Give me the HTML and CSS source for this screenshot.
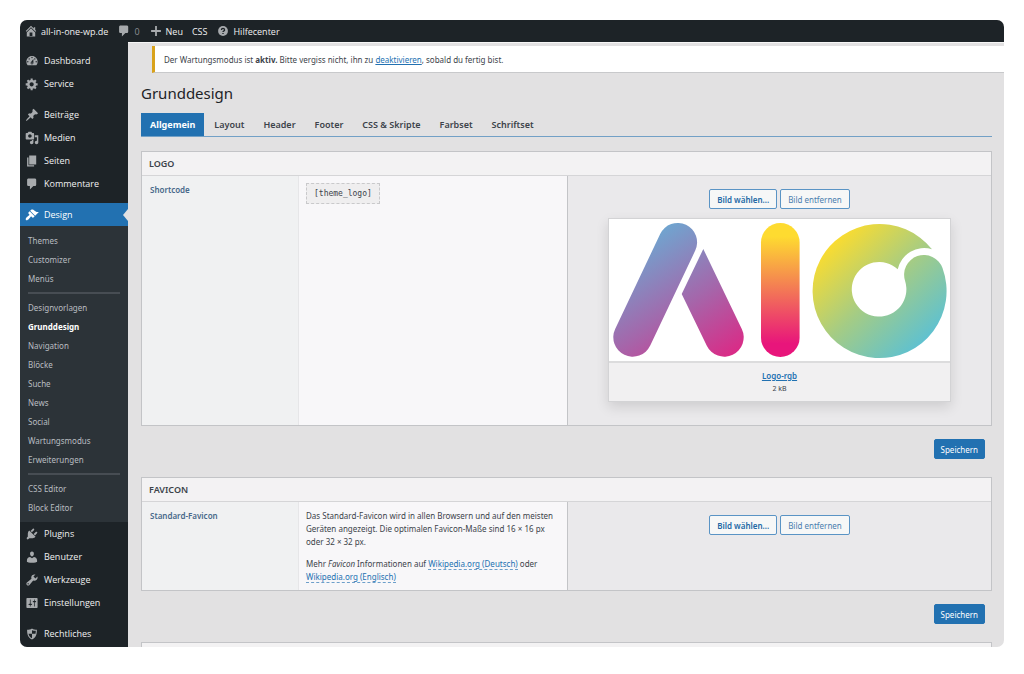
FILE: index.html
```html
<!DOCTYPE html>
<html lang="de">
<head>
<meta charset="utf-8">
<title>Grunddesign</title>
<link rel="stylesheet" href="styles.css">
</head>
<body>
<svg class="sprite" aria-hidden="true">
  <symbol id="i-home" viewBox="0 0 20 20"><path d="M16 8.500l1.530 1.530-1.060 1.060L10 4.600l-6.470 6.490-1.060-1.060L10 2.500l4 4v-2h2v4zm-6-2.460l6 5.990V18H4v-5.970zM12 17v-5H8v5h4z"/></symbol>
  <symbol id="i-comment" viewBox="0 0 20 20"><path d="M5 2h9c1.100 0 2 .9 2 2v7c0 1.100-.9 2-2 2h-2l-5 5v-5H5c-1.100 0-2-.9-2-2V4c0-1.100.9-2 2-2z"/></symbol>
  <symbol id="i-plus" viewBox="0 0 20 20"><path d="M17 8.700v2.600h-5.700V17H8.700v-5.700H3V8.700h5.700V3h2.600v5.700z"/></symbol>
  <symbol id="i-help" viewBox="0 0 20 20"><circle cx="10" cy="10" r="7"/><path class="cut-line" d="M7.800 8.400c0-2.800 4.400-2.800 4.400 0 0 1.600-2.200 1.600-2.200 3.200M10 12.800v1.600"/></symbol>
  <symbol id="i-dashboard" viewBox="0 0 20 20"><path d="M3.760 16h12.480c1.100-1.370 1.760-3.110 1.760-5 0-4.420-3.580-8-8-8s-8 3.580-8 8c0 1.890.66 3.630 1.760 5zM10 4c.55 0 1 .45 1 1s-.45 1-1 1-1-.45-1-1 .45-1 1-1zM6 6c.55 0 1 .45 1 1s-.45 1-1 1-1-.45-1-1 .45-1 1-1zm8 0c.55 0 1 .45 1 1s-.45 1-1 1-1-.45-1-1 .45-1 1-1zm-5.370 5.550L12 7v6c0 1.100-.9 2-2 2s-2-.9-2-2c0-.57.24-1.080.63-1.450zM4 10c.55 0 1 .45 1 1s-.45 1-1 1-1-.45-1-1 .45-1 1-1zm12 0c.55 0 1 .45 1 1s-.45 1-1 1-1-.45-1-1 .45-1 1-1zm-5 3c0-.55-.45-1-1-1s-1 .45-1 1 .45 1 1 1 1-.45 1-1z"/></symbol>
  <symbol id="i-gear" viewBox="0 0 20 20"><path d="M18 12h-2.180c-.17.7-.44 1.350-.81 1.930l1.540 1.540-2.100 2.100-1.540-1.540c-.58.36-1.230.63-1.910.79V19H8v-2.180c-.68-.16-1.330-.43-1.910-.79l-1.540 1.540-2.120-2.120 1.540-1.540c-.36-.58-.63-1.230-.79-1.910H1V9.030h2.170c.16-.7.44-1.350.8-1.940L2.430 5.550l2.100-2.100 1.540 1.540c.58-.37 1.240-.64 1.930-.81V2h3v2.180c.68.16 1.330.43 1.910.79l1.540-1.540 2.120 2.120-1.540 1.540c.36.59.64 1.240.8 1.940H18V12zm-8.500 1.500c1.660 0 3-1.340 3-3s-1.340-3-3-3-3 1.340-3 3 1.340 3 3 3z"/></symbol>
  <symbol id="i-pin" viewBox="0 0 20 20"><path d="M10.440 3.020l1.820-1.820 6.360 6.350-1.830 1.820c-1.050-.68-2.480-.57-3.410.36l-.75.75c-.92.93-1.040 2.350-.35 3.410l-1.830 1.820-2.410-2.410-2.800 2.790c-.42.42-3.380 2.710-3.800 2.290s1.860-3.390 2.280-3.810l2.790-2.790L4.100 9.360l1.830-1.820c1.050.69 2.480.57 3.400-.36l.75-.75c.93-.92 1.050-2.350.36-3.410z"/></symbol>
  <symbol id="i-media" viewBox="0 0 20 20"><path d="M13 11V4c0-.55-.45-1-1-1h-1.670L9 1H5L3.670 3H2c-.55 0-1 .45-1 1v7c0 .55.45 1 1 1h10c.55 0 1-.45 1-1zM7 4.500c1.380 0 2.500 1.120 2.500 2.500S8.380 9.500 7 9.500 4.500 8.380 4.500 7 5.620 4.500 7 4.500zM14 6h5v10.500c0 1.380-1.120 2.500-2.500 2.500S14 17.880 14 16.500s1.120-2.500 2.500-2.500c.17 0 .34.02.5.05V9h-3V6zm-4 8.050V13h2v3.500c0 1.380-1.120 2.500-2.500 2.500S7 17.880 7 16.500 8.120 14 9.500 14c.17 0 .34.02.5.05z"/></symbol>
  <symbol id="i-page" viewBox="0 0 20 20"><path d="M6 15V2h10v13H6zm-1 1h8v2H3V5h2v11z"/></symbol>
  <symbol id="i-brush" viewBox="0 0 20 20"><path d="M14.480 11.060L7.410 3.990l1.500-1.500c.5-.56 2.300-.47 3.510.32 1.210.8 1.430 1.280 2.910 2.100 1.180.64 2.450 1.260 4.450.85zm-.71.71L6.700 4.700 4.930 6.470c-.39.39-.39 1.020 0 1.410l1.060 1.060c.39.39.39 1.030 0 1.420-.6.6-1.430 1.110-2.210 1.690-.35.26-.7.53-1.010.84C1.430 14.230.4 16.080 1.400 17.070c.99 1 2.840-.03 4.180-1.360.31-.31.58-.66.85-1.020.57-.78 1.080-1.610 1.690-2.210.39-.39 1.020-.39 1.410 0l1.060 1.060c.39.39 1.020.39 1.410 0z"/></symbol>
  <symbol id="i-plug" viewBox="0 0 20 20"><path d="M13.110 4.360L9.870 7.600 8 5.730l3.240-3.240c.35-.34 1.050-.2 1.560.32.52.51.66 1.210.31 1.550zm-8 1.770l.91-1.120 9.010 9.010-1.190.84c-.71.71-2.630 1.160-3.820 1.160H6.140L4.900 17.260c-.59.59-1.540.59-2.120 0-.59-.58-.59-1.530 0-2.120l1.240-1.240v-3.880c0-1.130.4-3.190 1.090-3.890zm7.260 3.970l3.240-3.240c.34-.35 1.040-.21 1.550.31.52.51.66 1.210.31 1.550l-3.240 3.250z"/></symbol>
  <symbol id="i-user" viewBox="0 0 20 20"><path d="M10 9.250c-2.270 0-2.730-3.440-2.730-3.440C7 4.020 7.820 2 9.970 2c2.160 0 2.980 2.020 2.710 3.810 0 0-.41 3.440-2.680 3.440zm0 2.570L12.720 10c2.390 0 4.520 2.330 4.520 4.530v2.490s-3.650 1.130-7.240 1.130c-3.650 0-7.240-1.130-7.240-1.130v-2.490c0-2.250 1.940-4.480 4.470-4.480z"/></symbol>
  <symbol id="i-wrench" viewBox="0 0 20 20"><path d="M16.680 9.770c-1.340 1.340-3.300 1.670-4.950.99l-5.410 6.520c-.99.99-2.590.99-3.580 0s-.99-2.590 0-3.570l6.520-5.420c-.68-1.650-.35-3.610.99-4.950 1.280-1.280 3.120-1.620 4.720-1.060l-2.890 2.890 2.820 2.820 2.860-2.870c.53 1.580.18 3.390-1.080 4.650zM3.810 16.210c.4.39 1.040.39 1.430 0 .4-.4.4-1.040 0-1.430-.39-.4-1.030-.4-1.430 0-.39.39-.39 1.030 0 1.430z"/></symbol>
  <symbol id="i-sliders" viewBox="0 0 20 20"><path d="M18 16V4c0-.55-.45-1-1-1H3c-.55 0-1 .45-1 1v12c0 .55.45 1 1 1h14c.55 0 1-.45 1-1zM8 11h1c.55 0 1 .45 1 1s-.45 1-1 1H8v1.500c0 .28-.22.5-.5.5s-.5-.22-.5-.5V13H6c-.55 0-1-.45-1-1s.45-1 1-1h1V5.500c0-.28.22-.5.5-.5s.5.22.5.5V11zm5-2h-1c-.55 0-1-.45-1-1s.45-1 1-1h1V5.500c0-.28.22-.5.5-.5s.5.22.5.5V7h1c.55 0 1 .45 1 1s-.45 1-1 1h-1v5.500c0 .28-.22.5-.5.5s-.5-.22-.5-.5V9z"/></symbol>
  <symbol id="i-shield" viewBox="0 0 20 20"><path fill-rule="evenodd" d="M10 2c2 1.500 4.500 2 7 2 0 6-1 11-7 14-6-3-7-8-7-14 2.500 0 5-.5 7-2zM10 4.500v5H15c.3-1.300.4-2.500.4-4-2 0-3.700-.3-5.400-1zM10 9.500H5c.7 3 2.200 5 5 6.600z"/></symbol>
</svg>

<div class="app">
  <header class="adminbar">
    <a class="bar-item" href="#"><svg class="icon"><use href="#i-home"/></svg>all-in-one-wp.de</a>
    <a class="bar-item bar-comments" href="#"><svg class="icon"><use href="#i-comment"/></svg>0</a>
    <a class="bar-item" href="#"><svg class="icon"><use href="#i-plus"/></svg>Neu</a>
    <a class="bar-item" href="#">CSS</a>
    <a class="bar-item" href="#"><svg class="icon"><use href="#i-help"/></svg>Hilfecenter</a>
  </header>

  <div class="body">
    <nav class="sidebar">
      <a class="nav-item" href="#"><svg class="icon"><use href="#i-dashboard"/></svg>Dashboard</a>
      <a class="nav-item" href="#"><svg class="icon"><use href="#i-gear"/></svg>Service</a>
      <a class="nav-item nav-gap" href="#"><svg class="icon"><use href="#i-pin"/></svg>Beiträge</a>
      <a class="nav-item" href="#"><svg class="icon"><use href="#i-media"/></svg>Medien</a>
      <a class="nav-item" href="#"><svg class="icon"><use href="#i-page"/></svg>Seiten</a>
      <a class="nav-item" href="#"><svg class="icon"><use href="#i-comment"/></svg>Kommentare</a>
      <a class="nav-item nav-gap nav-current" href="#"><svg class="icon"><use href="#i-brush"/></svg>Design</a>
      <div class="submenu">
        <a href="#">Themes</a>
        <a href="#">Customizer</a>
        <a href="#">Menüs</a>
        <hr>
        <a href="#">Designvorlagen</a>
        <a class="sub-current" href="#">Grunddesign</a>
        <a href="#">Navigation</a>
        <a href="#">Blöcke</a>
        <a href="#">Suche</a>
        <a href="#">News</a>
        <a href="#">Social</a>
        <a href="#">Wartungsmodus</a>
        <a href="#">Erweiterungen</a>
        <hr>
        <a href="#">CSS Editor</a>
        <a href="#">Block Editor</a>
      </div>
      <a class="nav-item" href="#"><svg class="icon"><use href="#i-plug"/></svg>Plugins</a>
      <a class="nav-item" href="#"><svg class="icon"><use href="#i-user"/></svg>Benutzer</a>
      <a class="nav-item" href="#"><svg class="icon"><use href="#i-wrench"/></svg>Werkzeuge</a>
      <a class="nav-item" href="#"><svg class="icon"><use href="#i-sliders"/></svg>Einstellungen</a>
      <a class="nav-item nav-gap" href="#"><svg class="icon"><use href="#i-shield"/></svg>Rechtliches</a>
    </nav>

    <main class="main">
      <p class="notice">Der Wartungsmodus ist <strong>aktiv.</strong> Bitte vergiss nicht, ihn zu <a href="#">deaktivieren</a>, sobald du fertig bist.</p>
      <div class="wrap">
        <h1 class="title">Grunddesign</h1>
        <nav class="tabs">
          <a class="tab tab-active" href="#">Allgemein</a>
          <a class="tab" href="#">Layout</a>
          <a class="tab" href="#">Header</a>
          <a class="tab" href="#">Footer</a>
          <a class="tab" href="#">CSS &amp; Skripte</a>
          <a class="tab" href="#">Farbset</a>
          <a class="tab" href="#">Schriftset</a>
        </nav>

        <section class="box">
          <h2 class="box-title">LOGO</h2>
          <div class="row">
            <h3 class="cell label">Shortcode</h3>
            <div class="cell info"><code class="shortcode">[theme_logo]</code></div>
            <div class="cell media">
              <div class="buttons"><button class="btn btn-strong" type="button">Bild wählen...</button><button class="btn" type="button">Bild entfernen</button></div>
              <figure class="card">
                <svg class="logo" viewBox="0 0 341 142" role="img" aria-label="AIO">
                  <defs>
                    <linearGradient id="gA" gradientUnits="userSpaceOnUse" x1="50" y1="5" x2="130" y2="130"><stop offset="0" stop-color="#6ca9d2"/><stop offset=".55" stop-color="#a467ab"/><stop offset="1" stop-color="#d92c87"/></linearGradient>
                    <linearGradient id="gI" x1="0" y1="0" x2="0" y2="1"><stop offset=".1" stop-color="#fedb30"/><stop offset=".9" stop-color="#e8157b"/></linearGradient>
                    <linearGradient id="gO" gradientUnits="userSpaceOnUse" x1="225" y1="22" x2="318" y2="120"><stop offset="0" stop-color="#fadc30"/><stop offset=".5" stop-color="#a5cc84"/><stop offset="1" stop-color="#5fc1d0"/></linearGradient>
                  </defs>
                  <path d="M23.700 118.300L68.700 23.300" fill="none" stroke="url(#gA)" stroke-width="38.800" stroke-linecap="round"/>
                  <path d="M94.300 30L132.800 109.900A19.400 19.400 0 0 1 97.800 126.700L72.700 75z" fill="url(#gA)"/>
                  <rect x="152" y="4" width="38.600" height="134" rx="19.300" fill="url(#gI)"/>
                  <path d="M333.500 49A67 67 0 1 1 323 30.300A27 27 0 0 0 288.700 50.300A27.300 27.300 0 1 0 296.100 62A19.800 19.800 0 0 1 333.500 49z" fill="url(#gO)"/>
                </svg>
                <figcaption class="caption"><a href="#">Logo-rgb</a><span class="filesize">2 kB</span></figcaption>
              </figure>
            </div>
          </div>
        </section>
        <div class="save"><button class="btn btn-primary" type="button">Speichern</button></div>

        <section class="box">
          <h2 class="box-title">FAVICON</h2>
          <div class="row">
            <h3 class="cell label">Standard-Favicon</h3>
            <div class="cell info">
              <p>Das Standard-Favicon wird in allen Browsern und auf den meisten Geräten angezeigt. Die optimalen Favicon-Maße sind 16 × 16 px oder 32 × 32 px.</p>
              <p>Mehr <em>Favicon</em> Informationen auf <a href="#">Wikipedia.org (Deutsch)</a> oder <a href="#">Wikipedia.org (Englisch)</a></p>
            </div>
            <div class="cell media">
              <div class="buttons"><button class="btn btn-strong" type="button">Bild wählen...</button><button class="btn" type="button">Bild entfernen</button></div>
            </div>
          </div>
        </section>
        <div class="save"><button class="btn btn-primary" type="button">Speichern</button></div>

        <section class="box"><div class="box-title"></div></section>
      </div>
    </main>
  </div>
</div>
</body>
</html>
```
FILE: styles.css
```css
* { box-sizing: border-box; }

body {
  margin: 0;
  height: 100vh;
  padding: 20px 20px 27px;
  display: flex;
  background: #fff;
  color: #3c434a;
  font: 8px/13px "Noto Sans", "Open Sans", sans-serif;
}

h1, h2, h3, p, figure { margin: 0; }
a { color: #2271b1; }
button { font: inherit; }

.sprite { position: absolute; width: 0; height: 0; }
.icon { width: 14px; height: 14px; flex: none; fill: #a7aaad; }
.cut-line { fill: none; stroke: #1d2327; stroke-width: 2; }

.app {
  flex: 1;
  min-width: 0;
  display: flex;
  flex-direction: column;
  border-radius: 7px;
  overflow: hidden;
  background: #e2e1e2;
}

.adminbar {
  height: 22px;
  flex: none;
  display: flex;
  align-items: center;
  gap: 9px;
  padding-left: 4px;
  background: #1d2327;
}
.bar-item, .nav-item { font-family: "Open Sans", "Noto Sans", sans-serif; }
.bar-item {
  display: flex;
  align-items: center;
  gap: 3px;
  color: #f0f0f1;
  font-size: 9px;
  text-decoration: none;
}
.bar-comments { color: #8c8f94; }

.body { flex: 1; min-height: 0; display: flex; }

.sidebar { width: 108px; flex: none; padding-top: 7px; background: #1d2327; }
.nav-item {
  display: flex;
  align-items: center;
  gap: 5px;
  height: 23px;
  padding-left: 5px;
  color: #f0f0f1;
  font-size: 9px;
  text-decoration: none;
}
.nav-gap { margin-top: 8px; }
.nav-current { position: relative; background: #2271b1; color: #fff; }
.nav-current .icon { fill: #fff; }
.nav-current::after {
  content: "";
  position: absolute;
  right: 0;
  top: 6px;
  border: 6px solid transparent;
  border-left-width: 0;
  border-right: 5px solid #e2e1e2;
}
.submenu { padding: 5px 8px; background: #2c3338; }
.submenu a { display: block; line-height: 19px; color: #b9bdc1; text-decoration: none; }
.submenu .sub-current { color: #fff; font-weight: 700; }
.submenu hr { height: 2px; margin: 4px 0; border: 0; background: #474d53; }

.main { flex: 1; min-width: 0; overflow: hidden; padding-top: 3px; border-top: 1px solid #f6f6f6; }
.notice {
  margin-left: 24px;
  padding: 7px 9px 6px;
  background: #fff;
  border-left: 3px solid #d9a21b;
  border-bottom: 1px solid #c8c9cb;
}
.wrap { padding: 9px 12px 0 13px; }
.title { font-size: 15px; line-height: 22px; font-weight: 400; color: #1d2327; }

.tabs { display: flex; gap: 1px; margin-top: 9px; border-bottom: 1px solid #72a0c6; }
.tab {
  padding: 0 9px;
  line-height: 23px;
  font-size: 9px;
  font-weight: 600;
  color: #3c434a;
  text-decoration: none;
}
.tab-active { background: #2271b1; color: #fff; font-weight: 700; }

.box { margin-top: 14px; border: 1px solid #c3c4c7; }
.box-title {
  min-height: 24px;
  padding: 0 7px;
  line-height: 23px;
  font-size: 9px;
  font-weight: 600;
  background: #f3f2f3;
  border-bottom: 1px solid #d5d5d7;
}
.row { display: grid; grid-template-columns: 156fr 270fr 423fr; }
.cell { min-width: 0; }
.label { padding: 7px 8px; background: #f0f1f2; font-size: 8px; font-weight: 600; color: #48698a; }
.info {
  padding: 7px;
  background: #f8f7f9;
  border-left: 1px solid #e6e6e8;
  border-right: 1px solid #c3c4c7;
}
.info p + p { margin-top: 9px; }
.info p a { text-decoration: none; border-bottom: 1px dashed #6d9fca; }
.shortcode {
  display: inline-block;
  padding: 3px 7px;
  background: #efeeef;
  border: 1px dashed #c9c9cb;
  font: 8px/13px "DejaVu Sans Mono", monospace;
}
.media { padding: 13px 40px 23px; background: #eae9eb; }

.buttons { display: flex; justify-content: center; gap: 3px; }
.btn {
  height: 20px;
  padding: 0 7px;
  border: 1px solid #5a94c5;
  border-radius: 2px;
  background: #f6f7f7;
  color: #4a7eae;
  white-space: nowrap;
}
.btn-strong { color: #2268a5; font-weight: 600; }
.btn-primary { padding: 0 6px; border-color: #2271b1; background: #2271b1; color: #fff; }
.save { display: flex; justify-content: flex-end; padding: 13px 7px 4px; }

.card {
  margin-top: 9px;
  border: 1px solid #d3d3d5;
  background: #fff;
  box-shadow: 0 5px 12px rgba(0, 0, 0, .12);
}
.logo { display: block; width: 100%; }
.caption {
  display: flex;
  flex-direction: column;
  align-items: center;
  padding: 6px 0;
  border-top: 2px solid #dcdcdd;
  background: #f1f0f1;
}
.caption a { font-weight: 600; }
.filesize { font-size: 7px; }
```
